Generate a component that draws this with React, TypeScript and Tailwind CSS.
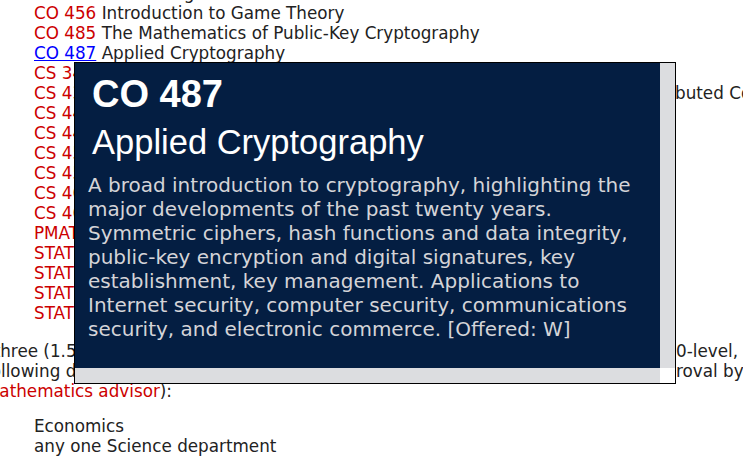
import React from "react";

interface Course {
  code: string;
  title: string;
  link?: boolean;
}

const courses: Course[] = [
  { code: "CO 454", title: "Scheduling" },
  { code: "CO 456", title: "Introduction to Game Theory" },
  { code: "CO 485", title: "The Mathematics of Public-Key Cryptography" },
  { code: "CO 487", title: "Applied Cryptography", link: true },
  { code: "CS 341", title: "Algorithms" },
];

const moreCourses: Course[] = [
  { code: "CS 442", title: "Principles of Programming Languages" },
  { code: "CS 444", title: "Compiler Construction" },
  { code: "CS 450", title: "Computer Architecture" },
  { code: "CS 454", title: "Distributed Systems" },
  { code: "CS 462", title: "Formal Languages and Parsing" },
  { code: "CS 466", title: "Algorithm Design and Analysis" },
  { code: "PMATH 440", title: "Analytic Number Theory" },
  { code: "STAT 330", title: "Mathematical Statistics" },
  { code: "STAT 333", title: "Applied Probability" },
  { code: "STAT 340", title: "Stochastic Simulation Methods" },
  { code: "STAT 341", title: "Computational Statistics" },
];

const description = [
  "A broad introduction to cryptography, highlighting the",
  "major developments of the past twenty years.",
  "Symmetric ciphers, hash functions and data integrity,",
  "public-key encryption and digital signatures, key",
  "establishment, key management. Applications to",
  "Internet security, computer security, communications",
  "security, and electronic commerce. [Offered: W]",
];

function CourseRow({ c }: { c: Course }) {
  return (
    <li className="whitespace-nowrap">
      {c.link ? (
        <a className="text-[#0000ff] underline">{c.code}</a>
      ) : (
        <span className="text-[#cc0000]">{c.code}</span>
      )}{" "}
      {c.title}
    </li>
  );
}

function Popup() {
  return (
    <div className="absolute left-[74px] top-[62px] flex h-[322px] w-[602px] flex-col border border-black">
      <div className="flex min-h-0 flex-1">
        <div className="flex-1 bg-[#041e42] pt-[12px]">
          <div className="px-[17px] font-['Liberation_Sans',Arial,sans-serif] text-white">
            <h2 className="text-[38px] font-bold leading-none">CO 487</h2>
            <h3 className="mt-[12px] text-[34.5px] leading-none">Applied Cryptography</h3>
          </div>
          <p className="mt-[13px] px-[13px] font-['DejaVu_Sans',Verdana,sans-serif] text-[20px] leading-[24px] text-[#d4d4d8]">
            {description.map((line, i) => (
              <React.Fragment key={i}>
                {line}
                {i < description.length - 1 && <br />}
              </React.Fragment>
            ))}
          </p>
        </div>
        <div className="w-[15px] bg-[#dcdde0]" />
      </div>
      <div className="flex h-[15px]">
        <div className="flex-1 bg-[#dcdde0]" />
        <div className="w-[15px] bg-white" />
      </div>
    </div>
  );
}

export default function App() {
  return (
    <div className="relative h-[456px] w-[743px] overflow-hidden bg-white font-['DejaVu_Sans',Verdana,sans-serif] text-[16.8px] leading-[20px] text-[#222]">
      {/* page is scrolled a little, so the top line and the left edge are cut */}
      <div className="-mt-[17px] -ml-[48px]">
        <ul className="pl-[82px]">
          {courses.map((c) => (
            <CourseRow key={c.code} c={c} />
          ))}
          <li className="whitespace-nowrap">
            <span className="inline-block w-[641px]">
              <span className="text-[#cc0000]">CS 436</span> Networks and Distri
            </span>
            buted Computer Systems
          </li>
          {moreCourses.map((c) => (
            <CourseRow key={c.code} c={c} />
          ))}
        </ul>

        <p className="mt-[18px] whitespace-nowrap">
          <span className="inline-block w-[724px]">
            take three (1.5 units) of additional courses at the 300-level or 40
          </span>
          0-level, excluding
          <br />
          <span className="inline-block w-[724px]">
            the following disciplines, or others with app
          </span>
          roval by
          <br />
          the <span className="text-[#cc0000]">Mathematics advisor</span>):
        </p>

        <ul className="mt-[15px] pl-[82px]">
          <li>Economics</li>
          <li>any one Science department</li>
        </ul>
      </div>

      <Popup />
    </div>
  );
}
